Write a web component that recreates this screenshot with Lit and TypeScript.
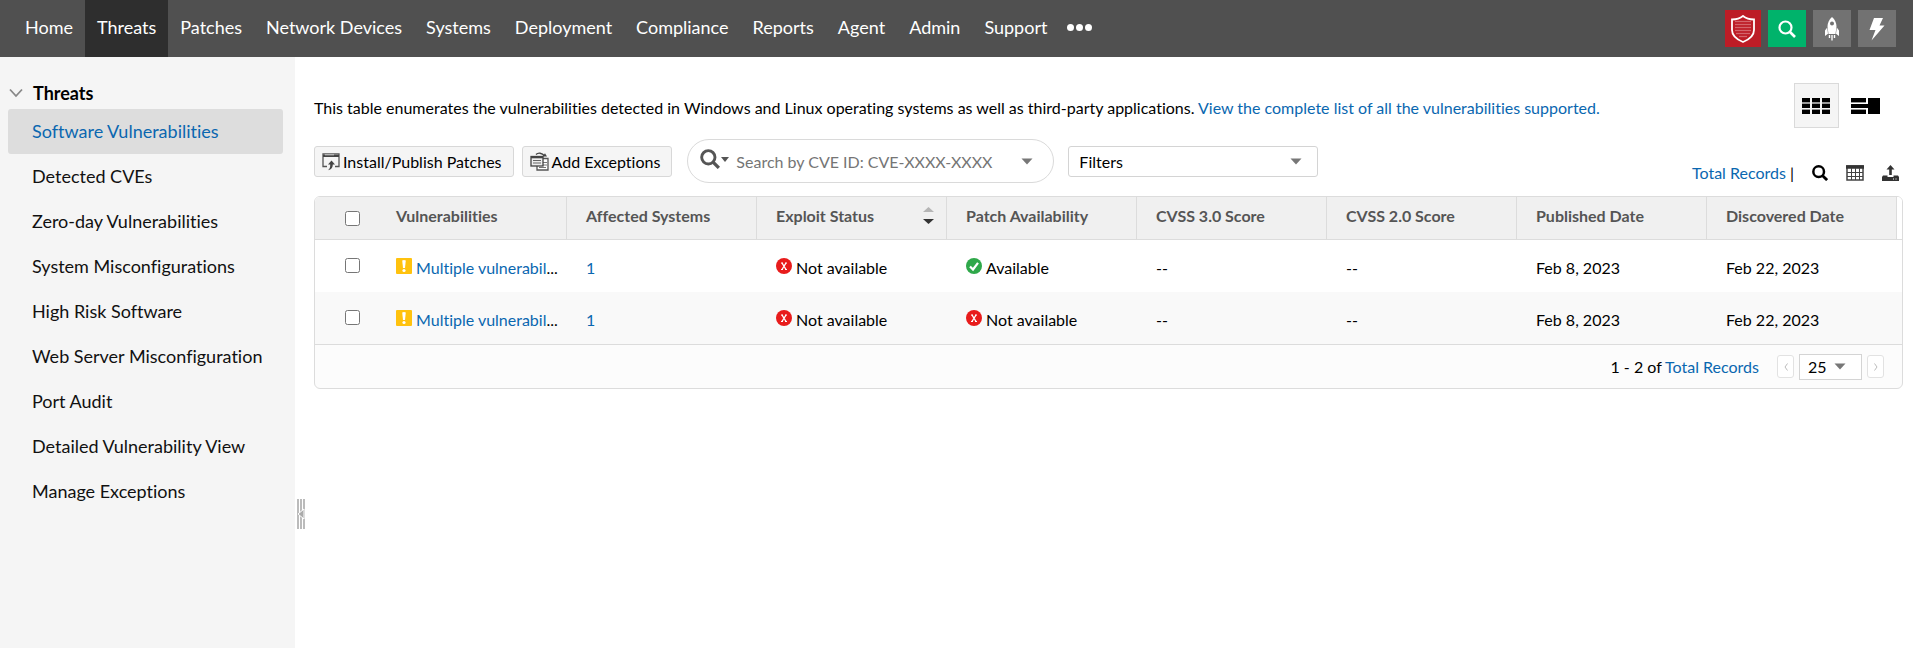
import { LitElement, html, css, svg, nothing } from "lit";
import { customElement, state } from "lit/decorators.js";
import { classMap } from "lit/directives/class-map.js";

const NAV = ["Home", "Threats", "Patches", "Network Devices", "Systems", "Deployment", "Compliance", "Reports", "Agent", "Admin", "Support"];

const SIDE = [
  "Software Vulnerabilities",
  "Detected CVEs",
  "Zero-day Vulnerabilities",
  "System Misconfigurations",
  "High Risk Software",
  "Web Server Misconfiguration",
  "Port Audit",
  "Detailed Vulnerability View",
  "Manage Exceptions",
];

const COLUMNS = ["Vulnerabilities", "Affected Systems", "Exploit Status", "Patch Availability", "CVSS 3.0 Score", "CVSS 2.0 Score", "Published Date", "Discovered Date"];

interface Row {
  name: string;
  systems: number;
  exploit: boolean;
  patch: boolean;
  cvss3: string;
  cvss2: string;
  published: string;
  discovered: string;
}

const ROWS: Row[] = [
  { name: "Multiple vulnerabil", systems: 1, exploit: false, patch: true, cvss3: "--", cvss2: "--", published: "Feb 8, 2023", discovered: "Feb 22, 2023" },
  { name: "Multiple vulnerabil", systems: 1, exploit: false, patch: false, cvss3: "--", cvss2: "--", published: "Feb 8, 2023", discovered: "Feb 22, 2023" },
];

const caret = html`<svg class="caret" width="12" height="7" viewBox="0 0 12 7" aria-hidden="true"><path d="M.5.5h11L6 6.5z" fill="#777" /></svg>`;

const magnifier = (size: number, color: string, width: number) => html`<svg width=${size} height=${size} viewBox="0 0 18 18" aria-hidden="true">
  <circle cx="7.5" cy="7.5" r="6" fill="none" stroke=${color} stroke-width=${width} />
  <path d="M12 12l5 5" stroke=${color} stroke-width=${width + 0.4} />
</svg>`;

const shieldIcon = html`<svg width="26" height="28" viewBox="0 0 26 28" aria-hidden="true">
  <path d="M13 1C10 3.500 6 4.500 2 4.500V15C2 21 8 25 13 27C18 25 24 21 24 15V4.500C20 4.500 16 3.500 13 1z" fill="none" stroke="#fff" stroke-width="1.800" />
  ${[6.5, 9.5, 12.5, 15.5, 18.5, 21.5].map((y, i) => svg`<path d=${i < 4 ? `M5 ${y}H21` : i === 4 ? `M6 ${y}H20` : `M9 ${y}H17`} stroke="#d4646b" stroke-width="1.300" />`)}
</svg>`;

const rocketIcon = html`<svg width="16" height="24" viewBox="0 0 16 24" aria-hidden="true">
  <path fill="#fff" fill-rule="evenodd" d="M8 0C5 2.500 3.500 6 3.500 9.500L4.500 17H11.500L12.500 9.500C12.500 6 11 2.500 8 0zM8 4.500a2 2 0 1 1 0 4a2 2 0 0 1 0-4z" />
  <path fill="#fff" d="M3.200 10.500L1 13.500V19l3-2.300zM12.800 10.500L15 13.500V19l-3-2.300z" />
  <path stroke="#fff" stroke-width="1.400" d="M5.500 18v3M10.500 18v3" />
  <path stroke="#d0d0d0" stroke-width="2" d="M8 18v5.500" />
</svg>`;

const boltIcon = html`<svg width="16" height="24" viewBox="0 0 16 24" aria-hidden="true"><path fill="#fff" d="M5 1H14L10.500 8.500H15.500L2.500 23.500L6.500 13H.5z" /></svg>`;

const installIcon = html`<svg width="18" height="18" viewBox="0 0 18 18" aria-hidden="true">
  <path d="M5 13.500H1V1H17V13.500H13" fill="none" stroke="#555" stroke-width="1.300" />
  <path d="M1 3H17" stroke="#444" stroke-width="2" /><path d="M3 1.800h9" stroke="#ccc" />
  <path d="M9.500 7.500L13 11.500H10.800C10.800 14.500 9.500 16.500 6 17.200C8 15.500 8.300 14 8.200 11.500H6z" fill="#444" />
</svg>`;

const exceptionIcon = html`<svg width="19" height="19" viewBox="0 0 19 19" aria-hidden="true">
  <path d="M6 2.500C8 .5 12 .5 14.500 4" fill="none" stroke="#444" stroke-width="1.400" />
  <path d="M12.500 4.500h4.500l-2-3.200z" fill="#444" />
  <path d="M9 6.500H18V18H7V14" fill="#fff" stroke="#555" stroke-width="1.300" />
  <path d="M13 10.500h4M13 13h4M9 15.500h7" stroke="#777" />
  <rect x="1" y="4.500" width="12" height="9.500" fill="#eee" stroke="#444" stroke-width="1.300" />
  <path d="M1 5.500h12" stroke="#444" stroke-width="1.600" /><path d="M3 8.500h8M3 11h8" stroke="#666" />
</svg>`;

const tableViewIcon = html`<svg width="29" height="16" viewBox="0 0 29 16" aria-hidden="true">
  ${[0, 10, 20].map((x) => [0, 6, 12].map((y) => svg`<rect x=${x} y=${y} width="8" height="4" /><path d=${`M${x} ${y === 0 ? 4.5 : y - 0.5}h8`} stroke="#999" />`))}
</svg>`;

const splitViewIcon = html`<svg width="29" height="16" viewBox="0 0 29 16" aria-hidden="true">
  <path d="M0 0h15v4H0zM0 6h17v4H0zM0 12h15v4H0zM17 0h12v16H17z" /><path d="M0 4.500h15M0 11.500h15" stroke="#999" />
</svg>`;

const gridIcon = html`<svg width="18" height="16" viewBox="0 0 18 16" aria-hidden="true">
  <rect x="1" y="1" width="16" height="14" fill="none" stroke="#444" stroke-width="1.500" />
  <path d="M0 2h18" stroke="#333" stroke-width="3.500" /><path d="M1 7.500h16M1 11.500h16M5.500 3v12M9.500 3v12M13.500 3v12" stroke="#444" />
</svg>`;

const exportIcon = html`<svg width="17" height="16" viewBox="0 0 17 16" aria-hidden="true">
  <path d="M8.500 0L12.500 4.500H9.800V10H7.200V4.500H4.500z" fill="#333" />
  <path d="M1 10.500H5.500V12H11.500V10.500H16L17 12V16H0V12z" fill="#333" /><path d="M11 14h1M13.500 14h1" stroke="#fff" />
</svg>`;

const warningIcon = html`<svg width="16" height="16" viewBox="0 0 16 16" aria-hidden="true">
  <rect width="16" height="16" rx="1" fill="#ffc20e" /><path d="M6.200 2.500q1.800-1 3.600 0L9 10H7z" fill="#fff" /><circle cx="8" cy="12.500" r="1.600" fill="#fff" />
</svg>`;

const statusIcon = (ok: boolean) => html`<svg width="16" height="16" viewBox="0 0 16 16" aria-hidden="true">
  <circle cx="8" cy="8" r="8" fill=${ok ? "#2fa84a" : "#e81c1c"} />
  ${ok
    ? svg`<path d="M4 8.500L7 11.500L12 4.800" fill="none" stroke="#fff" stroke-width="2.200" />`
    : svg`<path d="M6 5L10 11.500M10 5L6 11.500" stroke="#fff" stroke-width="1.400" /><path d="M5 5h2M9 5h2M5 11.500h2M9 11.500h2" stroke="#fff" />`}
</svg>`;

@customElement("app-root")
export class AppRoot extends LitElement {
  @state() private section = "Threats";
  @state() private page = "Software Vulnerabilities";

  static styles = css`
    :host {
      display: flex;
      flex-direction: column;
      min-height: 100vh;
      background: #fff;
      color: #000;
      font-family: Lato, "Liberation Sans", sans-serif;
      font-size: 16px;
      line-height: 20px;
      font-variant-ligatures: none;
    }
    * { box-sizing: border-box; }
    svg { display: block; flex: none; }
    a { color: #0a67b0; text-decoration: none; }
    button, input, select { font: inherit; font-variant-ligatures: none; color: inherit; margin: 0; }
    button { display: flex; align-items: center; justify-content: center; padding: 0; border: 0; background: none; cursor: pointer; }

    .top { display: flex; height: 57px; padding: 0 17px 0 13px; background: #505050; }
    .nav { display: flex; flex: 1; font-size: 18px; }
    .nav a { display: flex; align-items: center; padding: 0 12px 3px; color: #fff; white-space: nowrap; }
    .nav a.current { background: #2e2e2e; }
    .more { gap: 2px; padding: 0 8px 3px; }
    .more i { width: 7px; height: 7px; border-radius: 50%; background: #fff; }
    .tools { display: flex; align-items: center; gap: 7px; }
    .tool { width: 38px; height: 37px; background: #727272; }
    .tool.red { width: 36px; background: #bd1c26; }
    .tool.green { background: #00b36b; }

    .body { display: flex; flex: 1; }
    .side { flex: 0 0 295px; padding: 18px 12px 0 8px; background: #f5f5f5; font-size: 18px; }
    .side h2 { display: flex; align-items: center; gap: 10px; height: 34px; margin: 0; padding: 2px 0 0 1px; font-size: 18px; font-weight: 700; }
    .side ul { list-style: none; margin: 0; padding: 0; }
    .side li a { display: flex; align-items: center; height: 45px; padding: 0 0 2px 24px; border-radius: 3px; color: #111; white-space: nowrap; }
    .side li a.current { background: #ddd; color: #0a67b0; }
    .grip { flex: 0 0 19px; padding: 442px 0 0 2px; }

    .main { flex: 1; min-width: 0; padding: 26px 10px 0 0; }
    .intro { display: flex; align-items: center; justify-content: space-between; padding-right: 15px; }
    .intro p { margin: 0; padding-top: 4px; }
    .views { display: flex; gap: 4px; }
    .view { width: 45px; height: 45px; border: 1px solid transparent; }
    .view.on { background: #f5f5f5; border-color: #dadada; }

    .bar { display: flex; align-items: flex-start; height: 44px; margin-top: 11px; }
    .btn, .filters { height: 31px; margin-top: 7px; border-radius: 3px; }
    .btn { padding: 0 11px 0 7px; gap: 3px; margin-right: 8px; background: #f5f5f5; border: 1px solid #d8d8d8; white-space: nowrap; }
    .search { display: flex; align-items: center; width: 367px; height: 44px; margin-left: 7px; padding: 0 20px 0 12px; border: 1px solid #dadada; border-radius: 22px; }
    .scope { gap: 1px; margin-right: 7px; padding-bottom: 4px; }
    .search input { flex: 1; min-width: 0; height: 30px; padding: 0; border: 0; outline: 0; background: none; }
    .search input::placeholder { color: #757575; opacity: 1; }
    .pick { display: grid; align-items: center; border: 1px solid #d4d4d4; background: #fff; }
    .pick select { grid-area: 1 / 1; width: 100%; height: 100%; border: 0; outline: 0; background: none; appearance: none; }
    .pick .caret { grid-area: 1 / 1; justify-self: end; pointer-events: none; }
    .filters { width: 250px; margin-left: 14px; }
    .filters select { padding: 0 10px; }
    .filters .caret { margin-right: 15px; }
    .actions { display: flex; align-items: center; align-self: flex-end; gap: 18px; height: 20px; margin-left: auto; padding-right: 4px; }
    .actions span { white-space: nowrap; }

    .box { margin-top: 13px; border: 1px solid #dcdcdc; border-radius: 6px; overflow: hidden; background: #fcfcfc; }
    table { width: 100%; table-layout: fixed; border-collapse: separate; border-spacing: 0; background: #fff; }
    th, td { padding: 0 19px; text-align: left; white-space: nowrap; }
    th { height: 43px; padding-bottom: 4px; background: #f0f0f0; border-right: 1px solid #dcdcdc; border-bottom: 1px solid #dcdcdc; color: #555; font-weight: 700; }
    td { height: 52px; padding-top: 4px; }
    tr:nth-child(even) td { background: #f9f9f9; }
    .check { width: 62px; padding: 0 0 0 30px; }
    td.check { padding-bottom: 2px; padding-top: 0; }
    th.check { border-right: 0; }
    .check input { display: block; width: 15px; height: 15px; }
    .end { width: 5px; padding: 0; }
    th.end { background: #fff; border-right: 0; }
    .head { display: flex; align-items: center; justify-content: space-between; margin-right: -7px; }
    .cell { display: flex; align-items: center; gap: 4px; }
    .cell svg { margin-bottom: 5px; }
    .pager { display: flex; align-items: center; justify-content: flex-end; height: 44px; padding-right: 18px; border-top: 1px solid #dcdcdc; }
    .pager .range { margin-right: 18px; }
    .step { width: 17px; height: 23px; border: 1px solid #e2e2e2; border-radius: 3px; background: #fff; }
    .size { width: 63px; height: 26px; margin: 0 5px; }
    .size select { padding: 0 8px; }
    .size .caret { margin-right: 15px; }
  `;

  private go(e: Event, kind: "section" | "page", value: string) {
    e.preventDefault();
    this[kind] = value;
  }

  private status(ok: boolean) {
    return html`<td><div class="cell">${statusIcon(ok)}<span>${ok ? "Available" : "Not available"}</span></div></td>`;
  }

  render() {
    return html`
      <header class="top">
        <nav class="nav" aria-label="Main">
          ${NAV.map((n) => html`<a href="#" class=${classMap({ current: n === this.section })} @click=${(e: Event) => this.go(e, "section", n)}>${n}</a>`)}
          <button class="more" aria-label="More"><i></i><i></i><i></i></button>
        </nav>
        <div class="tools">
          <button class="tool red" aria-label="Security">${shieldIcon}</button>
          <button class="tool green" aria-label="Search">${magnifier(18, "#fff", 2.2)}</button>
          <button class="tool" aria-label="Launch">${rocketIcon}</button>
          <button class="tool" aria-label="Quick actions">${boltIcon}</button>
        </div>
      </header>
      <div class="body">
        <aside class="side">
          <h2><svg width="14" height="10" viewBox="0 0 14 10" aria-hidden="true"><path d="M1 1.500L7 8L13 1.500" fill="none" stroke="#888" stroke-width="1.800" /></svg>Threats</h2>
          <ul>
            ${SIDE.map((s) => html`<li><a href="#" class=${classMap({ current: s === this.page })} @click=${(e: Event) => this.go(e, "page", s)}>${s}</a></li>`)}
          </ul>
        </aside>
        <div class="grip">
          <svg width="8" height="30" viewBox="0 0 8 30" aria-hidden="true">
            <path d="M1 0v30M4 0v30M7 0v30" stroke="#bbb" stroke-width="2" /><path d="M7 10v10L1 15z" fill="#aaa" stroke="#fff" />
          </svg>
        </div>
        <main class="main">
          <div class="intro">
            <p>This table enumerates the vulnerabilities detected in Windows and Linux operating systems as well as third-party applications. <a href="#">View the complete list of all the vulnerabilities supported.</a></p>
            <div class="views">
              <button class="view on" aria-label="Table view">${tableViewIcon}</button>
              <button class="view" aria-label="Split view">${splitViewIcon}</button>
            </div>
          </div>
          <div class="bar">
            <button class="btn">${installIcon}<span>Install/Publish Patches</span></button>
            <button class="btn">${exceptionIcon}<span>Add Exceptions</span></button>
            <div class="search">
              <button class="scope" aria-label="Search scope">${magnifier(20, "#555", 2.6)}<svg width="8" height="5" viewBox="0 0 8 5"><path d="M0 0h8L4 5z" fill="#555" /></svg></button>
              <input type="text" aria-label="Search by CVE ID" placeholder="Search by CVE ID: CVE-XXXX-XXXX" />
              ${caret}
            </div>
            <div class="pick filters"><select aria-label="Filters"><option>Filters</option></select>${caret}</div>
            <div class="actions">
              <span><a href="#">Total Records</a> |</span>
              <button aria-label="Search table">${magnifier(16, "#000", 2.8)}</button>
              <button aria-label="Choose columns">${gridIcon}</button>
              <button aria-label="Export">${exportIcon}</button>
            </div>
          </div>
          <div class="box">
            <table>
              <thead>
                <tr>
                  <th class="check"><input type="checkbox" aria-label="Select all" /></th>
                  ${COLUMNS.map((c) => html`<th scope="col"><div class="head">${c}${c === "Exploit Status"
                    ? html`<svg width="11" height="18" viewBox="0 0 11 18" aria-hidden="true"><path d="M0 5h11L5.500 0z" fill="#b5b5b5" /><path d="M0 12h11L5.500 17z" fill="#333" /></svg>`
                    : nothing}</div></th>`)}
                  <th class="end"></th>
                </tr>
              </thead>
              <tbody>
                ${ROWS.map((r, i) => html`<tr>
                  <td class="check"><input type="checkbox" aria-label=${`Select row ${i + 1}`} /></td>
                  <td><div class="cell">${warningIcon}<span><a href="#">${r.name}</a>...</span></div></td>
                  <td><a href="#">${r.systems}</a></td>
                  ${this.status(r.exploit)}${this.status(r.patch)}
                  <td>${r.cvss3}</td><td>${r.cvss2}</td><td>${r.published}</td><td>${r.discovered}</td>
                  <td class="end"></td>
                </tr>`)}
              </tbody>
            </table>
            <div class="pager">
              <span class="range">1 - 2 of <a href="#">Total Records</a></span>
              <button class="step" aria-label="Previous page"><svg width="4" height="8" viewBox="0 0 4 8"><path d="M3.500 .5L1 4L3.500 7.500" fill="none" stroke="#bbb" /></svg></button>
              <div class="pick size"><select aria-label="Rows per page"><option>25</option><option>50</option></select>${caret}</div>
              <button class="step" aria-label="Next page"><svg width="4" height="8" viewBox="0 0 4 8"><path d="M.5 .5L3 4L.5 7.500" fill="none" stroke="#bbb" /></svg></button>
            </div>
          </div>
        </main>
      </div>
    `;
  }
}
